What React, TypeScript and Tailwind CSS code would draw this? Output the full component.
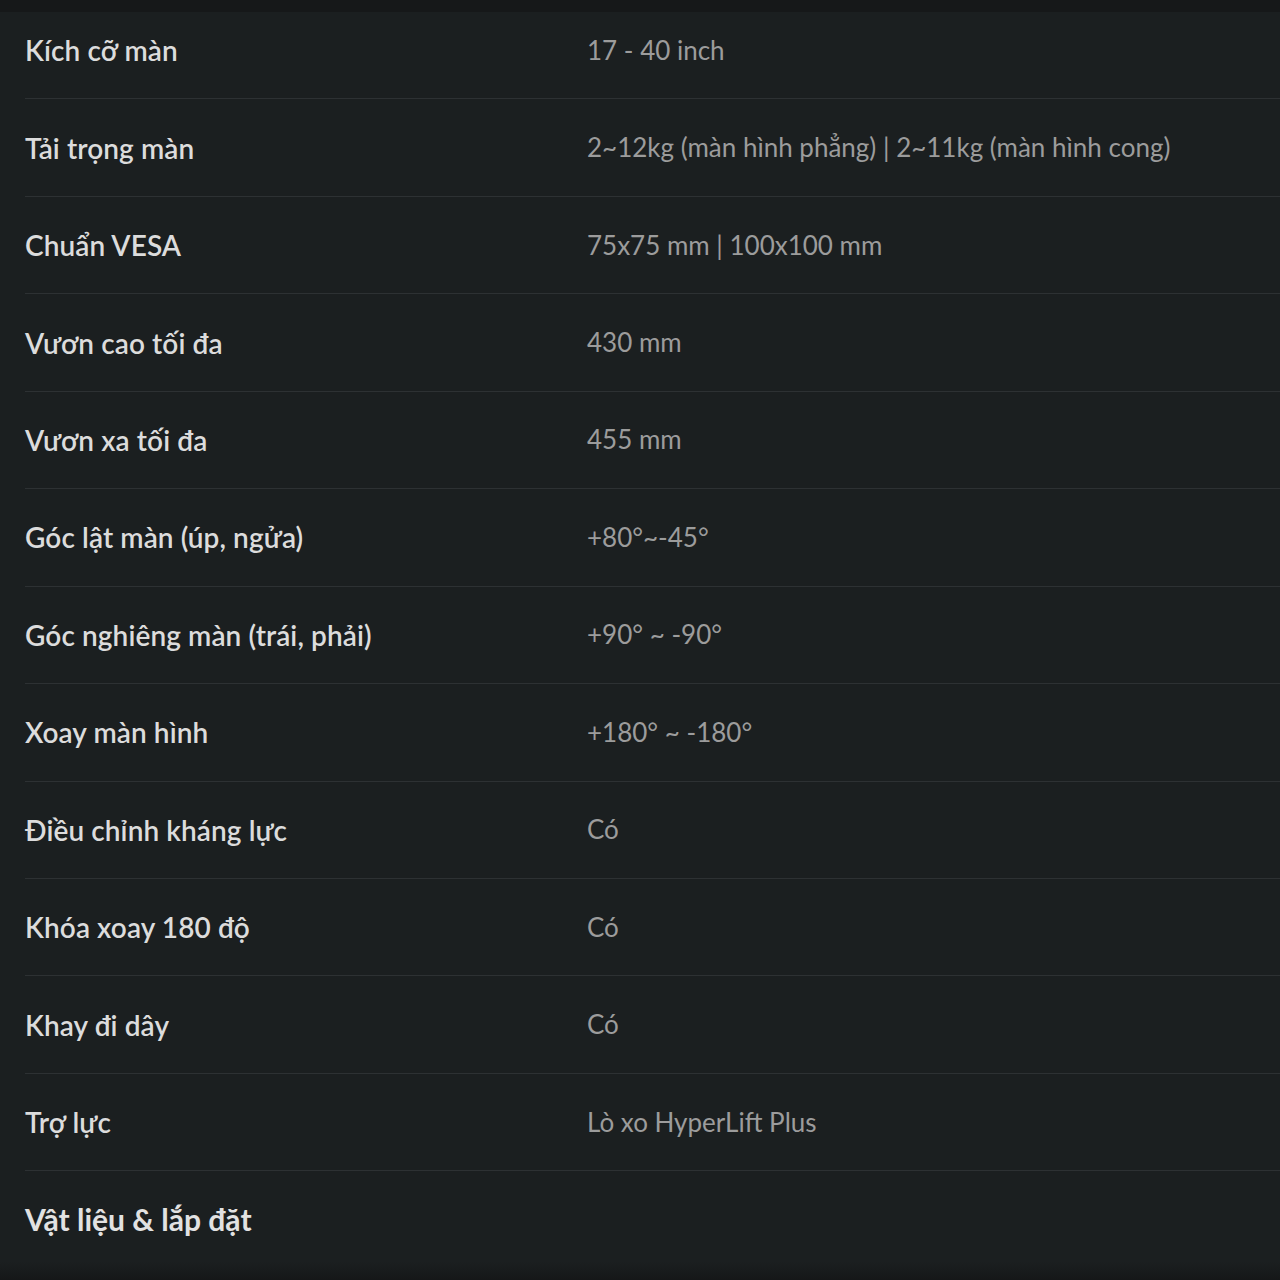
const specs = [
  { label: "Kích cỡ màn", value: "17 - 40 inch" },
  { label: "Tải trọng màn", value: "2~12kg (màn hình phẳng) | 2~11kg (màn hình cong)" },
  { label: "Chuẩn VESA", value: "75x75 mm | 100x100 mm" },
  { label: "Vươn cao tối đa", value: "430 mm" },
  { label: "Vươn xa tối đa", value: "455 mm" },
  { label: "Góc lật màn (úp, ngửa)", value: "+80°~-45°" },
  { label: "Góc nghiêng màn (trái, phải)", value: "+90° ~ -90°" },
  { label: "Xoay màn hình", value: "+180° ~ -180°" },
  { label: "Điều chỉnh kháng lực", value: "Có" },
  { label: "Khóa xoay 180 độ", value: "Có" },
  { label: "Khay đi dây", value: "Có" },
  { label: "Trợ lực", value: "Lò xo HyperLift Plus" },
];

export default function App() {
  return (
    <div
      className="relative h-[1280px] w-[1280px] overflow-hidden bg-[#1b1f20] pt-[2px]"
      style={{ fontFamily: "Lato, 'Noto Sans', sans-serif" }}
    >
      <div className="pointer-events-none absolute inset-x-0 top-0 h-[12px] bg-[#161819]" />
      <div className="pointer-events-none absolute inset-x-0 bottom-0 h-[18px] bg-gradient-to-b from-[#1b1f20] to-[#151718]" />
      <div className="pl-[25px]">
        {specs.map((s) => (
          <div
            key={s.label}
            className="flex h-[97.45px] items-center border-b border-[#2d3133]"
          >
            <div className="w-[562px] text-[28px] font-semibold tracking-[0.1px] text-[#dcdcdc]">{s.label}</div>
            <div className="text-[26px] text-[#9c9c9c]">{s.value}</div>
          </div>
        ))}
        <div className="flex h-[97px] items-center">
          <h3 className="text-[30px] font-bold text-[#e2e2e2]">Vật liệu &amp; lắp đặt</h3>
        </div>
      </div>
    </div>
  );
}
